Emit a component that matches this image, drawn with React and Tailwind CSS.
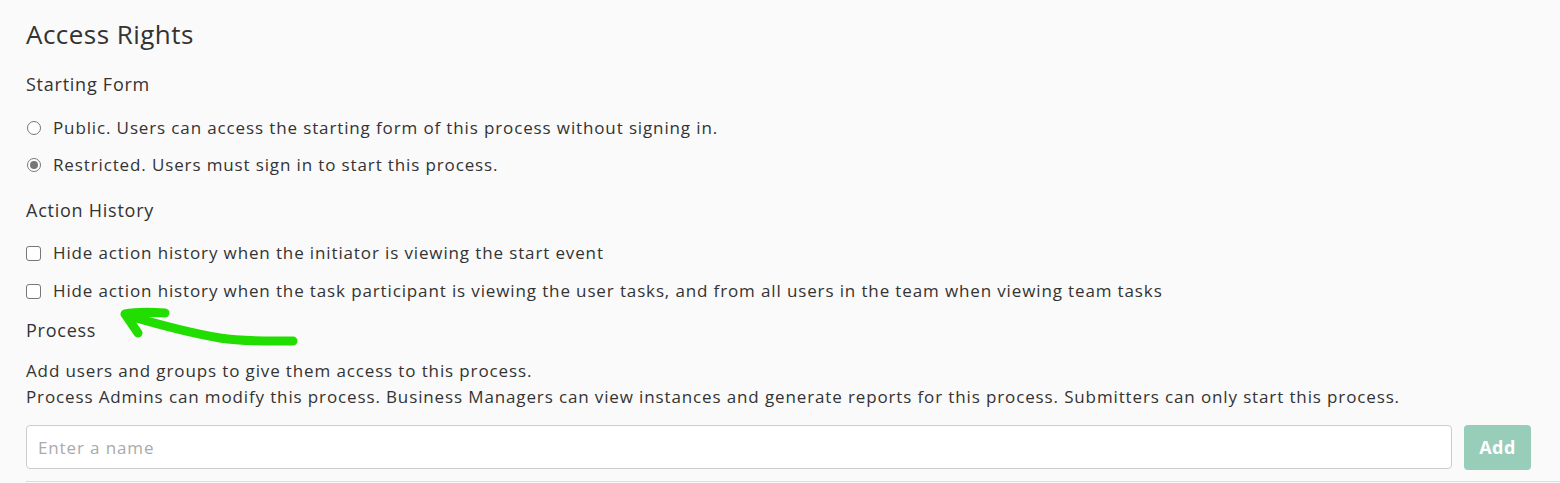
export default function App() {
  return (
    <div className="relative min-h-screen bg-[#fafafa] text-[#333] font-['Open_Sans',sans-serif]">
      <div className="px-[26px] pt-[17px]">
        <h1 className="text-[26px] leading-[34px] tracking-[0.46px] text-[#333]">Access Rights</h1>

        <h2 className="mt-[20px] text-[18px] leading-[26px] font-medium tracking-[0.75px]">Starting Form</h2>

        <label className="mt-[18px] flex items-center gap-[12px] text-[17px] leading-[26px] tracking-[0.87px]">
          <span className="ml-px w-[14px] h-[14px] rounded-full border border-[#777] bg-white" />
          Public. Users can access the starting form of this process without signing in.
        </label>
        <label className="mt-[11px] flex items-center gap-[12px] text-[17px] leading-[26px] tracking-[0.87px]">
          <span className="ml-px w-[14px] h-[14px] rounded-full border border-[#777] bg-white flex items-center justify-center">
            <span className="w-[8px] h-[8px] rounded-full bg-[#777]" />
          </span>
          Restricted. Users must sign in to start this process.
        </label>

        <h2 className="mt-[19px] text-[18px] leading-[26px] font-medium tracking-[0.75px]">Action History</h2>

        <label className="mt-[17px] flex items-center gap-[12px] text-[17px] leading-[26px] tracking-[0.87px]">
          <span className="w-[15px] h-[15px] rounded-[3px] border border-[#777] bg-white" />
          Hide action history when the initiator is viewing the start event
        </label>
        <label className="mt-[12px] flex items-center gap-[12px] text-[17px] leading-[26px] tracking-[0.87px]">
          <span className="w-[15px] h-[15px] rounded-[3px] border border-[#777] bg-white" />
          Hide action history when the task participant is viewing the user tasks, and from all users in the team when viewing team tasks
        </label>

        <h2 className="mt-[13px] text-[18px] leading-[26px] font-medium tracking-[0.75px]">Process</h2>

        <p className="mt-[15px] text-[17px] leading-[26px] tracking-[0.87px]">
          Add users and groups to give them access to this process.
          <br />
          Process Admins can modify this process. Business Managers can view instances and generate reports for this process. Submitters can only start this process.
        </p>

        <div className="mt-[15px] flex items-start gap-[12px] pr-[3px]">
          <input
            type="text"
            placeholder="Enter a name"
            className="flex-1 h-[44px] rounded-[4px] border border-[#ccc] bg-white px-[11px] text-[17px] tracking-[0.87px] placeholder:text-[#aaa] outline-none"
          />
          <button className="w-[67px] h-[45px] rounded-[4px] bg-[#97cdb9] text-white text-[18px] font-bold tracking-[0.5px]">
            Add
          </button>
        </div>

        <div className="mt-[11px] -mr-[26px] border-t border-[#ddd]" />
      </div>

      <svg
        className="absolute left-0 top-0 pointer-events-none"
        width="400"
        height="360"
        viewBox="0 0 400 360"
      >
        <path
          d="M165 313 C150 312 135 312 125 314 L138 333 M126 315 C160 325 190 333 220 338 C245 342 270 341 293 341"
          fill="none"
          stroke="#22dd00"
          strokeWidth="9"
          strokeLinecap="round"
          strokeLinejoin="round"
        />
      </svg>
    </div>
  );
}
